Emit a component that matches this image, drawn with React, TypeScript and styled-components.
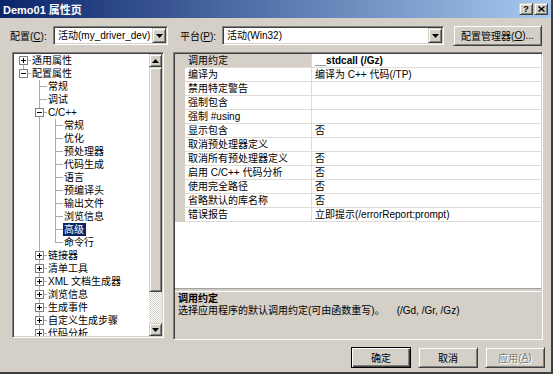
import React from 'react';
import styled, { createGlobalStyle, css } from 'styled-components';

const FONT = `"Liberation Sans", "Noto Sans CJK SC", sans-serif`;
const FACE = '#d4d0c8';
const LINE = '#acacac';

const GlobalStyle = createGlobalStyle`
  html, body { margin: 0; padding: 0; background: ${FACE}; }
  body { font-family: ${FONT}; font-size: 10px; color: #000; }
  * { box-sizing: border-box; }
  u { text-decoration: underline; text-underline-offset: 1px; }
`;

const raised = css`
  background: ${FACE};
  border: 1px solid;
  border-color: ${FACE} #404040 #404040 ${FACE};
  box-shadow: inset 1px 1px 0 #fff, inset -1px -1px 0 #808080;
`;

const sunken = css`
  border: 1px solid;
  border-color: #808080 #fff #fff #808080;
  padding: 1px;
  box-shadow: inset 1px 1px 0 #404040, inset -1px -1px 0 ${FACE};
`;

const Window = styled.div`
  width: 553px;
  height: 374px;
  background: ${FACE};
  display: flex;
  flex-direction: column;
  border-right: 2px solid #404040;
  border-bottom: 2px solid #404040;
  overflow: hidden;
`;

const TitleBar = styled.div`
  flex: none;
  height: 18px;
  display: flex;
  align-items: center;
  padding: 0 3px 0 3px;
  background: linear-gradient(to right, #0a246a, #a6caf0);
`;

const TitleText = styled.span`
  flex: 1;
  color: #fff;
  font-weight: bold;
  font-size: 11px;
  white-space: nowrap;
`;

const CaptionButton = styled.span<{ $gap?: number }>`
  ${raised};
  width: 14px;
  height: 12px;
  margin-left: ${p => p.$gap ?? 0}px;
  display: flex;
  align-items: center;
  justify-content: center;
  font-weight: bold;
  font-size: 9px;
  line-height: 9px;
`;

const Toolbar = styled.div`
  flex: none;
  height: 21px;
  margin-top: 7px;
  padding-left: 10px;
  display: flex;
  align-items: center;
`;

const FieldLabel = styled.span<{ $w: number; $ml?: number }>`
  width: ${p => p.$w}px;
  margin-left: ${p => p.$ml ?? 0}px;
  white-space: nowrap;
`;

const Combo = styled.div<{ $w: number }>`
  ${sunken};
  width: ${p => p.$w}px;
  height: 19px;
  background: #fff;
  display: flex;
  align-items: stretch;
`;

const ComboText = styled.span`
  flex: 1;
  padding-left: 3px;
  line-height: 15px;
  white-space: nowrap;
  overflow: hidden;
`;

const DropButton = styled.span`
  ${raised};
  width: 14px;
  display: flex;
  align-items: center;
  justify-content: center;
`;

const PushButton = styled.button<{ $w: number; $ml?: number; $default?: boolean }>`
  ${raised};
  width: ${p => p.$w}px;
  height: 21px;
  margin-left: ${p => p.$ml ?? 0}px;
  padding: 0;
  font-family: ${FONT};
  font-size: 10px;
  color: #000;
  display: flex;
  align-items: center;
  justify-content: center;
  white-space: nowrap;
  ${p =>
    p.$default &&
    css`
      border-color: #000;
      box-shadow: inset 1px 1px 0 #fff, inset -1px -1px 0 #404040, inset -2px -2px 0 #808080;
    `}
  &:disabled {
    color: #808080;
    text-shadow: 1px 1px 0 #fff;
  }
`;

const Main = styled.div`
  flex: none;
  height: 288px;
  margin-top: 6px;
  padding-left: 12px;
  display: flex;
  align-items: flex-start;
  gap: 9px;
`;

const TreeFrame = styled.div`
  ${sunken};
  width: 152px;
  height: 286px;
  background: #fff;
  display: flex;
`;

const TreeBody = styled.div`
  flex: 1;
  overflow: hidden;
  padding-left: 1px;
`;

const TreeRow = styled.div`
  height: 13px;
  display: flex;
  align-items: center;
`;

const Guide = styled.span<{ $line: boolean }>`
  flex: none;
  width: 16px;
  height: 13px;
  background: ${p => (p.$line ? `linear-gradient(${LINE}, ${LINE}) 8px 0 / 1px 13px no-repeat` : 'none')};
`;

const Connector = styled.span<{ $top: boolean; $bottom: boolean }>`
  position: relative;
  flex: none;
  width: 16px;
  height: 13px;
  display: flex;
  align-items: center;
  &::before {
    content: '';
    position: absolute;
    left: 8px;
    width: 1px;
    top: ${p => (p.$top ? 0 : 6)}px;
    bottom: ${p => (p.$bottom ? 0 : 6)}px;
    background: ${LINE};
  }
  &::after {
    content: '';
    position: absolute;
    left: 9px;
    right: 0;
    top: 6px;
    height: 1px;
    background: ${LINE};
  }
`;

const Expander = styled.span`
  position: relative;
  z-index: 1;
  width: 9px;
  height: 9px;
  margin-left: 4px;
  border: 1px solid #808080;
  background: #fff;
  display: flex;
  align-items: center;
  justify-content: center;
`;

const TreeLabel = styled.span<{ $selected?: boolean }>`
  height: 13px;
  line-height: 13px;
  padding: 0 2px 0 1px;
  white-space: nowrap;
  background: ${p => (p.$selected ? '#0a246a' : 'transparent')};
  color: ${p => (p.$selected ? '#fff' : '#000')};
`;

const ScrollBar = styled.div`
  flex: none;
  width: 13px;
  display: flex;
  flex-direction: column;
`;

const ScrollArrow = styled.span`
  ${raised};
  flex: none;
  height: 13px;
  display: flex;
  align-items: center;
  justify-content: center;
`;

const ScrollThumb = styled.span<{ $h: number }>`
  ${raised};
  flex: none;
  height: ${p => p.$h}px;
`;

const ScrollTrack = styled.span`
  flex: 1;
  background-color: #fff;
  background-image: conic-gradient(${FACE} 25%, #fff 0 50%, ${FACE} 0 75%, #fff 0);
  background-size: 2px 2px;
`;

const GridFrame = styled.div`
  ${sunken};
  width: 370px;
  height: 288px;
  display: flex;
  flex-direction: column;
`;

const GridBody = styled.div`
  flex: 1;
  background: #fff;
  display: flex;
  flex-direction: column;
`;

const PropRow = styled.div`
  display: grid;
  grid-template-columns: 10px 127px 1fr;
  height: 14px;
`;

const MarginCell = styled.span`
  background: ${FACE};
`;

const NameCell = styled.span<{ $selected?: boolean }>`
  padding-left: 3px;
  line-height: 13px;
  white-space: nowrap;
  overflow: hidden;
  border-bottom: 1px solid #dedcd6;
  border-right: 1px solid #dedcd6;
  background: ${p => (p.$selected ? FACE : '#fff')};
`;

const ValueCell = styled.span<{ $bold?: boolean }>`
  padding-left: 3px;
  line-height: 13px;
  white-space: nowrap;
  overflow: hidden;
  border-bottom: 1px solid #dedcd6;
  font-weight: ${p => (p.$bold ? 'bold' : 'normal')};
`;

const Splitter = styled.div`
  flex: none;
  height: 4px;
  border-top: 1px solid #a0a0a0;
  border-bottom: 1px solid #fff;
  background: ${FACE};
`;

const Description = styled.div`
  flex: none;
  height: 46px;
  padding: 1px 3px 0;
  line-height: 12px;
`;

const DescTitle = styled.div`
  font-weight: bold;
`;

const DescText = styled.div`
  white-space: nowrap;
`;

const DescFlags = styled.span`
  margin-left: 12px;
`;

const ButtonRow = styled.div`
  flex: none;
  margin-top: 7px;
  padding-right: 6px;
  display: flex;
  justify-content: flex-end;
  gap: 7px;
`;

const ArrowDown = () => (
  <svg width="7" height="4" viewBox="0 0 7 4">
    <polygon points="0,0 7,0 3.5,4" fill="#000" />
  </svg>
);

const ArrowUp = () => (
  <svg width="7" height="4" viewBox="0 0 7 4">
    <polygon points="0,4 7,4 3.5,0" fill="#000" />
  </svg>
);

const PlusMinus = ({ plus }: { plus: boolean }) => (
  <svg width="5" height="5" viewBox="0 0 5 5">
    <path d={plus ? 'M0 2.5H5M2.5 0V5' : 'M0 2.5H5'} stroke="#000" strokeWidth="1" />
  </svg>
);

type Node = {
  label: string;
  guides: boolean[];
  exp?: '+' | '-';
  first?: boolean;
  hasNext: boolean;
  selected?: boolean;
};

const cpp = ['常规', '优化', '预处理器', '代码生成', '语言', '预编译头', '输出文件', '浏览信息', '高级', '命令行'];
const after = ['链接器', '清单工具', 'XML 文档生成器', '浏览信息', '生成事件', '自定义生成步骤', '代码分析'];

const nodes: Node[] = [
  { label: '通用属性', guides: [], exp: '+', first: true, hasNext: true },
  { label: '配置属性', guides: [], exp: '-', hasNext: false },
  { label: '常规', guides: [false], hasNext: true },
  { label: '调试', guides: [false], hasNext: true },
  { label: 'C/C++', guides: [false], exp: '-', hasNext: true },
  ...cpp.map((label, i) => ({
    label,
    guides: [false, true],
    hasNext: i < cpp.length - 1,
    selected: label === '高级',
  })),
  ...after.map(label => ({ label, guides: [false], exp: '+' as const, hasNext: true })),
];

const props: [string, string][] = [
  ['调用约定', '__stdcall (/Gz)'],
  ['编译为', '编译为 C++ 代码(/TP)'],
  ['禁用特定警告', ''],
  ['强制包含', ''],
  ['强制 #using', ''],
  ['显示包含', '否'],
  ['取消预处理器定义', ''],
  ['取消所有预处理器定义', '否'],
  ['启用 C/C++ 代码分析', '否'],
  ['使用完全路径', '否'],
  ['省略默认的库名称', '否'],
  ['错误报告', '立即提示(/errorReport:prompt)'],
];

export default function App() {
  return (
    <>
      <GlobalStyle />
      <Window>
        <TitleBar>
          <TitleText>Demo01 属性页</TitleText>
          <CaptionButton>?</CaptionButton>
          <CaptionButton $gap={1}>
            <svg width="7" height="6" viewBox="0 0 7 6">
              <path d="M0.5 0.5L6.5 5.5M6.5 0.5L0.5 5.5" stroke="#000" strokeWidth="1.4" />
            </svg>
          </CaptionButton>
        </TitleBar>

        <Toolbar>
          <FieldLabel $w={43}>
            配置(<u>C</u>):
          </FieldLabel>
          <Combo $w={115}>
            <ComboText>活动(my_driver_dev)</ComboText>
            <DropButton>
              <ArrowDown />
            </DropButton>
          </Combo>
          <FieldLabel $w={42} $ml={12}>
            平台(<u>P</u>):
          </FieldLabel>
          <Combo $w={222}>
            <ComboText>活动(Win32)</ComboText>
            <DropButton>
              <ArrowDown />
            </DropButton>
          </Combo>
          <PushButton $w={89} $ml={9}>
            配置管理器(<u>O</u>)...
          </PushButton>
        </Toolbar>

        <Main>
          <TreeFrame>
            <TreeBody>
              {nodes.map((n, i) => (
                <TreeRow key={i}>
                  {n.guides.map((g, j) => (
                    <Guide key={j} $line={g} />
                  ))}
                  <Connector $top={!n.first} $bottom={n.hasNext}>
                    {n.exp && (
                      <Expander>
                        <PlusMinus plus={n.exp === '+'} />
                      </Expander>
                    )}
                  </Connector>
                  <TreeLabel $selected={n.selected}>{n.label}</TreeLabel>
                </TreeRow>
              ))}
            </TreeBody>
            <ScrollBar>
              <ScrollArrow>
                <ArrowUp />
              </ScrollArrow>
              <ScrollThumb $h={225} />
              <ScrollTrack />
              <ScrollArrow>
                <ArrowDown />
              </ScrollArrow>
            </ScrollBar>
          </TreeFrame>

          <GridFrame>
            <GridBody>
              {props.map(([name, value], i) => (
                <PropRow key={i}>
                  <MarginCell />
                  <NameCell $selected={i === 0}>{name}</NameCell>
                  <ValueCell $bold={i === 0}>{value}</ValueCell>
                </PropRow>
              ))}
            </GridBody>
            <Splitter />
            <Description>
              <DescTitle>调用约定</DescTitle>
              <DescText>
                选择应用程序的默认调用约定(可由函数重写)。
                <DescFlags>(/Gd, /Gr, /Gz)</DescFlags>
              </DescText>
            </Description>
          </GridFrame>
        </Main>

        <ButtonRow>
          <PushButton $w={60} $default>
            确定
          </PushButton>
          <PushButton $w={60}>取消</PushButton>
          <PushButton $w={60} disabled>
            应用(<u>A</u>)
          </PushButton>
        </ButtonRow>
      </Window>
    </>
  );
}
